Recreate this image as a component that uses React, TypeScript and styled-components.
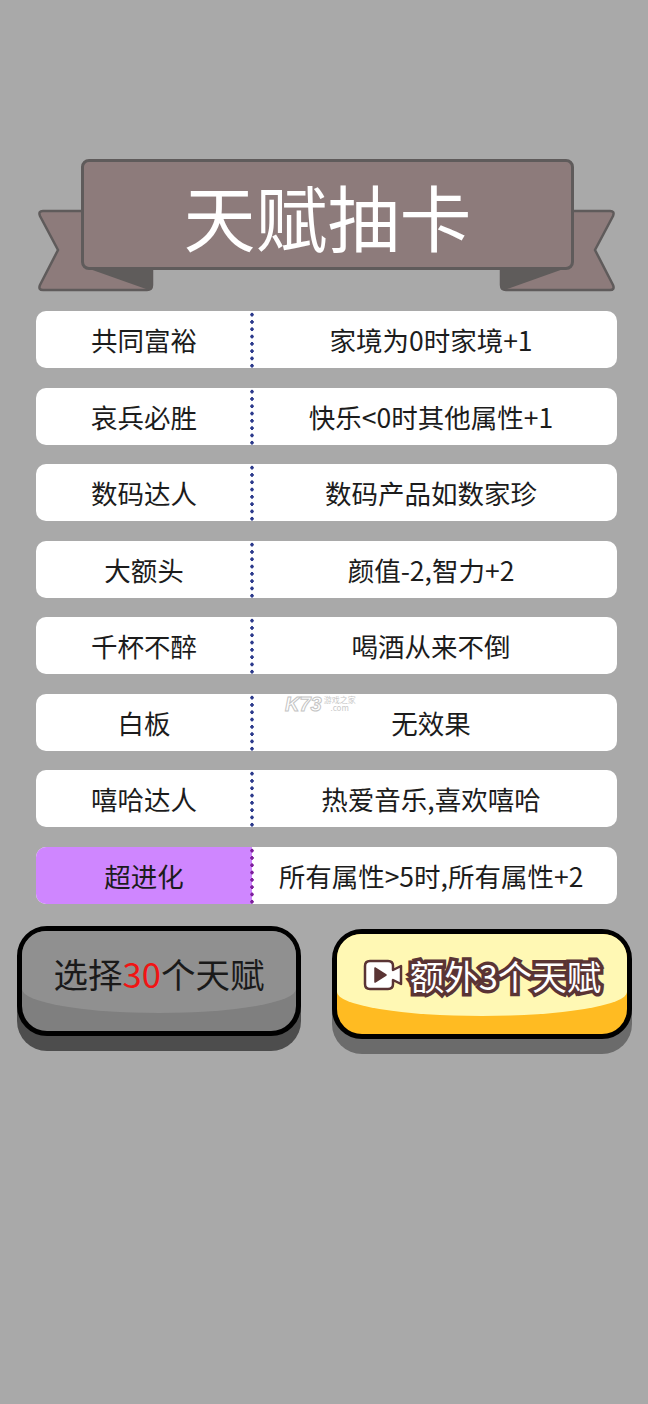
import React from 'react';
import styled, { createGlobalStyle } from 'styled-components';

const talents = [
  { name: '共同富裕', effect: '家境为0时家境+1' },
  { name: '哀兵必胜', effect: '快乐<0时其他属性+1' },
  { name: '数码达人', effect: '数码产品如数家珍' },
  { name: '大额头', effect: '颜值-2,智力+2' },
  { name: '千杯不醉', effect: '喝酒从来不倒' },
  { name: '白板', effect: '无效果', mark: true },
  { name: '嘻哈达人', effect: '热爱音乐,喜欢嘻哈' },
  { name: '超进化', effect: '所有属性>5时,所有属性+2', rare: true },
];

const Global = createGlobalStyle`
  html, body {
    margin: 0;
    padding: 0;
    background: #a9a9a9;
  }
  body {
    font-family: "Noto Sans CJK SC", "Noto Sans", sans-serif;
  }
`;

const Page = styled.div`
  width: 648px;
  height: 1404px;
  overflow: hidden;
  padding-top: 159px;
  box-sizing: border-box;
  background: #a9a9a9;
`;

const Ribbon = styled.div`
  position: relative;
  width: 577px;
  height: 133px;
  margin-left: 38px;
`;

const Tails = styled.svg`
  position: absolute;
  left: 0;
  top: 50px;
`;

const Title = styled.h1`
  position: relative;
  box-sizing: border-box;
  width: 493px;
  height: 111px;
  margin: 0 0 0 43px;
  display: flex;
  align-items: center;
  justify-content: center;
  background: #8d7b7b;
  border: 3px solid #5f5b5b;
  border-radius: 8px;
  color: #fff;
  font-size: 72px;
  font-weight: 400;
  line-height: 1;
  letter-spacing: 0;
`;

const List = styled.div`
  display: flex;
  flex-direction: column;
  gap: 19.5px;
  width: 581px;
  margin: 19px 0 0 36px;
`;

const Row = styled.div`
  position: relative;
  display: flex;
  height: 57px;
  background: #fff;
  border-radius: 10px;
  overflow: hidden;
  color: #1c1c1c;
  font-size: 26.5px;
`;

const NameCell = styled.div<{ $rare?: boolean }>`
  width: 216px;
  display: flex;
  align-items: center;
  justify-content: center;
  background: ${(p) => (p.$rare ? '#cf86ff' : 'transparent')};
`;

const Divider = styled.div<{ $rare?: boolean }>`
  width: 4px;
  margin-left: -2px;
  margin-right: -2px;
  background-image: radial-gradient(
    circle at center,
    ${(p) => (p.$rare ? '#7d1f9c' : '#2c3a8c')} 1.5px,
    transparent 1.9px
  );
  background-size: 4px 7.3px;
  background-position: 0 0;
  z-index: 1;
`;

const EffectCell = styled.div`
  flex: 1;
  display: flex;
  align-items: center;
  justify-content: center;
  padding-right: 7px;
  white-space: nowrap;
`;

const Mark = styled.div`
  position: absolute;
  left: 249px;
  top: 0;
  display: flex;
  align-items: center;
  gap: 2px;
  color: #fff;
`;

const MarkLogo = styled.span`
  font-family: "Liberation Sans", sans-serif;
  font-size: 20px;
  font-weight: 700;
  font-style: italic;
  color: #fff;
  -webkit-text-stroke: 1px #c4c4c4;
  line-height: 1;
`;

const MarkSide = styled.span`
  display: flex;
  flex-direction: column;
  align-items: center;
  font-size: 8px;
  line-height: 8px;
  color: #c9c9c9;
`;

const Actions = styled.div`
  display: flex;
  align-items: flex-start;
  margin: 22px 0 0 17px;
`;

const Button = styled.button<{ $width: number; $top: number; $face: string; $base: string; $shadow: string }>`
  position: relative;
  box-sizing: border-box;
  width: ${(p) => p.$width}px;
  height: 110px;
  margin: ${(p) => p.$top}px 0 0 0;
  padding: 0 0 18px;
  display: flex;
  align-items: center;
  justify-content: center;
  border: 5px solid #000;
  border-radius: 30px;
  background: ${(p) => p.$base};
  box-shadow: 0 15px 0 ${(p) => p.$shadow};
  overflow: visible;
  font-family: inherit;
  font-weight: 400;

  &::before {
    content: '';
    position: absolute;
    left: 0;
    right: 0;
    top: 0;
    bottom: 18px;
    background: ${(p) => p.$face};
    border-radius: 24px 24px 50% 50% / 24px 24px 24px 24px;
  }
`;

const SelectLabel = styled.span`
  position: relative;
  font-size: 34.5px;
  color: #1a1a1a;
  white-space: nowrap;
  top: 1px;
`;

const Count = styled.span`
  color: #f01414;
`;

const ExtraLabel = styled.span`
  position: relative;
  font-size: 34.5px;
  color: #fff;
  -webkit-text-stroke: 7px #5a3434;
  paint-order: stroke fill;
  white-space: nowrap;
`;

const VideoIcon = styled.svg`
  position: relative;
  flex: none;
  margin-right: 7px;
`;

const Gap = styled.div`
  width: 31px;
  flex: none;
`;

function RibbonTails() {
  const side = (
    <>
      <path
        d="M5 2 H114 V76 Q114 81 109 81 H5 Q0 81 2 76 L20 41 L2 7 Q0 2 5 2 Z"
        fill="#8d7b7b"
        stroke="#5f5b5b"
        strokeWidth="2.5"
      />
      <path d="M46 58 H114 V77 Q114 81 108 80 Z" fill="#5f5c5b" />
    </>
  );
  return (
    <Tails width="577" height="84" viewBox="0 0 577 84">
      <g>{side}</g>
      <g transform="translate(577 0) scale(-1 1)">{side}</g>
    </Tails>
  );
}

export default function App() {
  return (
    <Page>
      <Global />
      <Ribbon>
        <RibbonTails />
        <Title>天赋抽卡</Title>
      </Ribbon>
      <List>
        {talents.map((t) => (
          <Row key={t.name}>
            <NameCell $rare={t.rare}>{t.name}</NameCell>
            <Divider $rare={t.rare} />
            <EffectCell>{t.effect}</EffectCell>
            {t.mark && (
              <Mark>
                <MarkLogo>K73</MarkLogo>
                <MarkSide>
                  <span>游戏之家</span>
                  <span>.com</span>
                </MarkSide>
              </Mark>
            )}
          </Row>
        ))}
      </List>
      <Actions>
        <Button $width={284} $top={0} $face="#909090" $base="#7f7f7f" $shadow="#4d4d4d">
          <SelectLabel>
            选择<Count>30</Count>个天赋
          </SelectLabel>
        </Button>
        <Gap />
        <Button $width={300} $top={3} $face="#fff8b4" $base="#ffbb22" $shadow="#6b6b6b">
          <VideoIcon width="40" height="32" viewBox="0 0 40 32">
            <path
              d="M7 2 H25 Q30 2 30 7 V11 L38 7 V25 L30 21 V25 Q30 30 25 30 H7 Q2 30 2 25 V7 Q2 2 7 2 Z"
              fill="#fff"
              stroke="#5a3434"
              strokeWidth="2.5"
              strokeLinejoin="round"
            />
            <path d="M12 9 L23 16 L12 23 Z" fill="#5a3434" stroke="#5a3434" strokeWidth="1.5" strokeLinejoin="round" />
          </VideoIcon>
          <ExtraLabel>额外3个天赋</ExtraLabel>
        </Button>
      </Actions>
    </Page>
  );
}
